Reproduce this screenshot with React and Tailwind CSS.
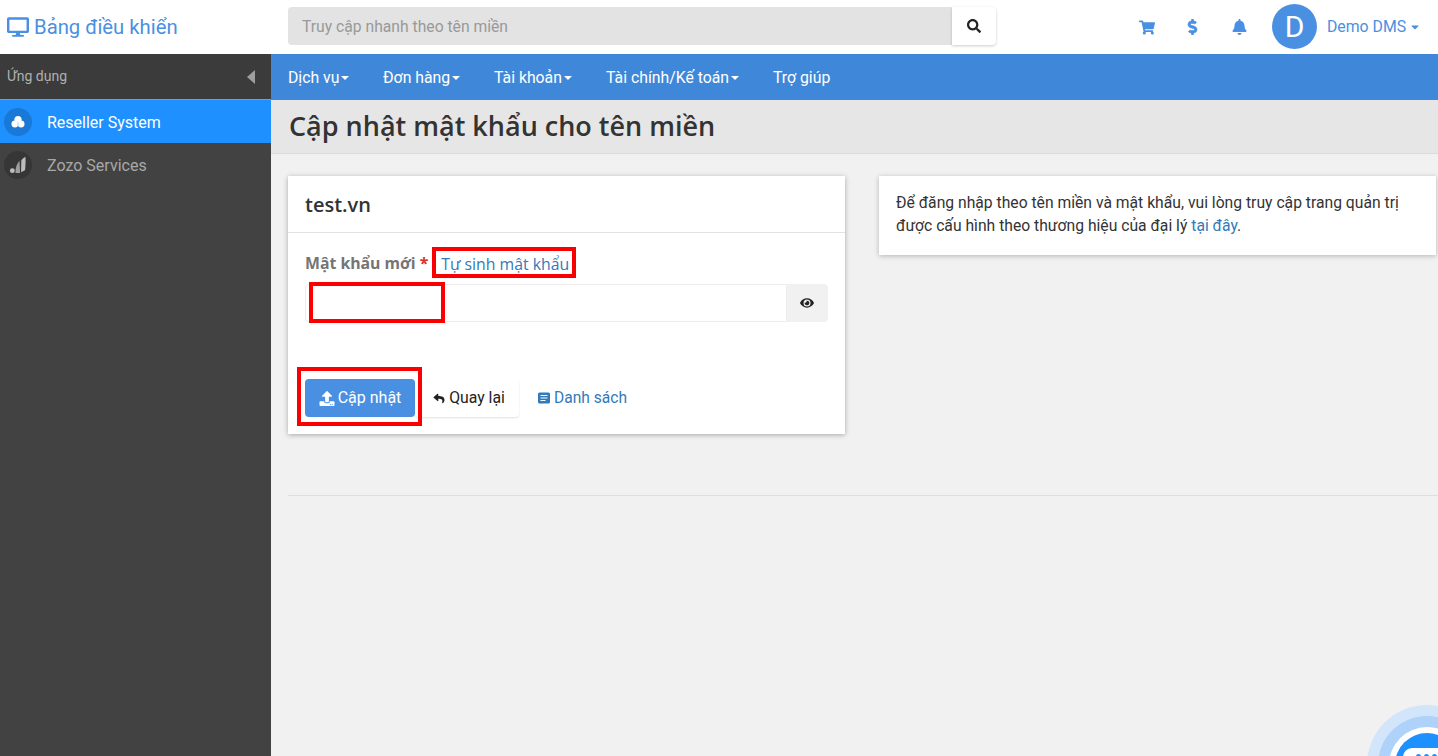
import { FaDesktop, FaShoppingCart, FaDollarSign, FaBell, FaUpload, FaReply, FaEye, FaSearch, FaCaretDown } from "react-icons/fa";

const navItems = [
  { name: "Dịch vụ", caret: true, width: "w-[95px]" },
  { name: "Đơn hàng", caret: true, width: "w-[111px]" },
  { name: "Tài khoản", caret: true, width: "w-[112px]" },
  { name: "Tài chính/Kế toán", caret: true, width: "w-[167px]" },
  { name: "Trợ giúp", caret: false, width: "w-auto" },
];

const Caret = () => (
  <span className="ml-[2px] inline-block h-0 w-0 border-x-[4px] border-t-[4px] border-x-transparent border-t-current align-middle" />
);

const ListIcon = () => (
  <svg viewBox="0 0 12 12" className="h-[12px] w-[12px]">
    <rect x="0" y="0.5" width="12" height="11" rx="1.5" fill="#337ab7" />
    <path d="M2.5 3.5h7M2.5 6h7M2.5 8.5h5" stroke="#fff" strokeWidth="1.1" />
  </svg>
);

const ResellerIcon = () => (
  <svg viewBox="0 0 14 14" className="h-[14px] w-[14px]">
    <circle cx="7" cy="4.5" r="3.6" fill="#fff" />
    <circle cx="3.9" cy="9" r="3.4" fill="#fff" />
    <circle cx="10.1" cy="9" r="3.4" fill="#fff" />
    <path d="M7 7v5" stroke="#8cc4ff" strokeWidth="0.8" />
  </svg>
);

const ZozoIcon = () => (
  <svg viewBox="0 0 14 14" className="h-[18px] w-[18px]">
    <circle cx="2.6" cy="11.4" r="1.9" fill="#bdbdbd" />
    <path d="M5 13.2 C5 9 6 6 8.2 3.6 L8.6 13.2 Z" fill="#9e9e9e" />
    <path d="M9.4 12.6 L9.6 3.4 C10.4 2.2 11.6 1.2 12.8 0.6 C13 4 12.8 9 12.4 11 Z" fill="#bdbdbd" />
  </svg>
);

const App = () => {
  return (
    <div className="relative h-[756px] w-[1438px] overflow-hidden bg-white font-['Roboto',sans-serif] text-[15px] text-[#333]">
      {/* Header */}
      <header className="flex h-[54px] items-center bg-white">
        <div className="flex w-[288px] items-center pl-[7px] text-[#4a90e2]">
          <FaDesktop className="h-[20px] w-[22px]" />
          <span className="ml-[5px] text-[20.3px]">Bảng điều khiển</span>
        </div>
        <div className="flex h-[38px] w-[708px] -translate-y-[1px]">
          <div className="flex flex-1 items-center rounded-l-[4px] bg-[#e3e3e3] pl-[14px] text-[15.7px] text-[#999]">
            <span className="translate-y-[1px]">Truy cập nhanh theo tên miền</span>
          </div>
          <div className="flex w-[44px] items-center justify-center rounded-r-[4px] bg-white text-[#222] shadow-[0_1px_3px_rgba(0,0,0,0.2)]">
            <FaSearch className="h-[14px] w-[14px]" />
          </div>
        </div>
        <div className="ml-[143px] flex items-center text-[#4a90e2]">
          <FaShoppingCart className="h-[15px] w-[16px]" />
          <FaDollarSign className="ml-[30px] h-[16px] w-[15px] stroke-current stroke-[20]" />
          <FaBell className="ml-[32px] h-[16px] w-[15px]" />
          <div className="ml-[25px] flex h-[45px] w-[45px] -translate-y-[1px] items-center justify-center rounded-full bg-[#4a90e2] text-[30px] text-white">
            D
          </div>
          <span className="ml-[10px] text-[15.8px]">Demo DMS</span>
          <FaCaretDown className="ml-[4px] h-[12px] w-[10px]" />
        </div>
      </header>

      <div className="flex h-[702px]">
        {/* Sidebar */}
        <aside className="w-[271px] shrink-0 bg-[#424242]">
          <div className="flex h-[46px] items-center justify-between border-b border-[#5aa9e6] bg-[#3b3b3b] pl-[7px] pr-[16px] text-[14px] text-[#b0b0b0]">
            <span>Ứng dụng</span>
            <span className="h-0 w-0 border-y-[7px] border-r-[8px] border-y-transparent border-r-[#9e9e9e]" />
          </div>
          <div className="flex h-[43px] items-center bg-[#1e90ff] pl-[4px] text-[16px] text-white">
            <span className="flex h-[28px] w-[28px] items-center justify-center rounded-full bg-[#1a78d6]">
              <ResellerIcon />
            </span>
            <span className="ml-[15px] translate-y-[1px]">Reseller System</span>
          </div>
          <div className="flex h-[43px] items-center pl-[4px] text-[16px] text-[#a8a8a8]">
            <span className="flex h-[28px] w-[28px] items-center justify-center rounded-full bg-[#363636]">
              <ZozoIcon />
            </span>
            <span className="ml-[15px] translate-y-[1px]">Zozo Services</span>
          </div>
        </aside>

        {/* Main */}
        <main className="flex-1 bg-[#f1f1f1]">
          <nav className="flex h-[46px] items-center bg-[#3f88d9] pl-[17px] pt-[1px] text-[15.8px] text-white">
            {navItems.map((item) => (
              <span key={item.name} className={`flex items-center ${item.width}`}>
                {item.name}
                {item.caret && <Caret />}
              </span>
            ))}
          </nav>
          <div className="flex h-[54px] items-center border-b border-[#dcdcdc] bg-[#e6e6e6] pl-[18px] font-['Open_Sans',sans-serif] text-[27px] font-semibold text-[#333]">
            Cập nhật mật khẩu cho tên miền
          </div>

          <div className="mt-[22px] flex items-start pl-[17px]">
            {/* Form card */}
            <section className="h-[258px] w-[557px] bg-white shadow-[0_1px_5px_rgba(0,0,0,0.3)]">
              <div className="flex h-[57px] items-center border-b border-[#e2e2e2] pl-[17px] pt-[1px] font-['Open_Sans',sans-serif] text-[20px] font-semibold">
                test.vn
              </div>
              <div className="px-[17px] pt-[21px]">
                <div className="flex h-[20px] items-center font-['Open_Sans',sans-serif] text-[15.8px]">
                  <span className="font-bold text-[#757575]">Mật khẩu mới</span>
                  <span className="ml-[4px] font-bold text-[#d9302c]">*</span>
                  <span className="ml-[13px] translate-y-[1px] text-[#337ab7]">Tự sinh mật khẩu</span>
                </div>
                <div className="mt-[10px] flex h-[38px]">
                  <div className="flex-1 rounded-l-[4px] border border-[#ececec] bg-white" />
                  <div className="flex w-[41px] items-center justify-center rounded-r-[4px] bg-[#f1f1f1] pb-[1px] pr-[2px] text-[#222]">
                    <FaEye className="h-[14px] w-[14px]" />
                  </div>
                </div>
                <div className="mt-[57px] flex items-center text-[16px]">
                  <button className="flex h-[38px] w-[110px] items-center justify-center rounded-[4px] bg-[#4a90e2] text-white">
                    <FaUpload className="mr-[3px] h-[15px] w-[16px]" />
                    Cập nhật
                  </button>
                  <button className="flex h-[38px] w-[104px] items-center justify-center rounded-[4px] bg-white pl-[4px] text-[15.8px] text-[#222] shadow-[0_1px_2px_rgba(0,0,0,0.12)]">
                    <FaReply className="mr-[4px] h-[11px] w-[12px]" />
                    Quay lại
                  </button>
                  <span className="ml-[19px] flex items-center text-[15.6px] text-[#337ab7]">
                    <ListIcon />
                    <span className="ml-[4px] translate-y-[1px]">Danh sách</span>
                  </span>
                </div>
              </div>
            </section>

            {/* Info card */}
            <section className="ml-[34px] h-[79px] w-[557px] bg-white px-[17px] pt-[16px] text-[15.7px] leading-[22.5px] text-[#333] shadow-[0_1px_5px_rgba(0,0,0,0.25)]">
              Để đăng nhập theo tên miền và mật khẩu, vui lòng truy cập trang quản trị được cấu hình theo thương hiệu của đại lý <span className="text-[#337ab7]">tại đây</span>.
            </section>
          </div>

          <hr className="ml-[17px] mt-[61px] border-t border-[#dedede]" />
        </main>
      </div>

      {/* Red annotation boxes */}
      <div className="absolute left-[432px] top-[247px] h-[31px] w-[144px] border-[4px] border-[#fa0000]" />
      <div className="absolute left-[309px] top-[282px] h-[41px] w-[136px] border-[4px] border-[#fa0000]" />
      <div className="absolute left-[297px] top-[367px] h-[59px] w-[125px] border-[4px] border-[#fa0000]" />

      {/* Chat widget */}
      <div className="absolute left-[1367px] top-[705px] flex h-[120px] w-[120px] items-center justify-center rounded-full bg-[#d2e5fb]">
        <div className="flex h-[98px] w-[98px] items-center justify-center rounded-full bg-[#aed2fa]">
          <div className="flex h-[76px] w-[76px] items-center justify-center rounded-full bg-white">
            <div className="relative h-[64px] w-[64px] rounded-full bg-[#1e90ff]">
              <div className="absolute left-[8px] top-[15px] flex h-[30px] w-[46px] justify-center gap-[3px] rounded-[9px] bg-white pt-[6px]">
                <span className="h-[5px] w-[5px] rounded-full bg-[#1e90ff]" />
                <span className="h-[5px] w-[5px] rounded-full bg-[#1e90ff]" />
                <span className="h-[5px] w-[5px] rounded-full bg-[#1e90ff]" />
              </div>
            </div>
          </div>
        </div>
      </div>
    </div>
  );
};

export default App;
